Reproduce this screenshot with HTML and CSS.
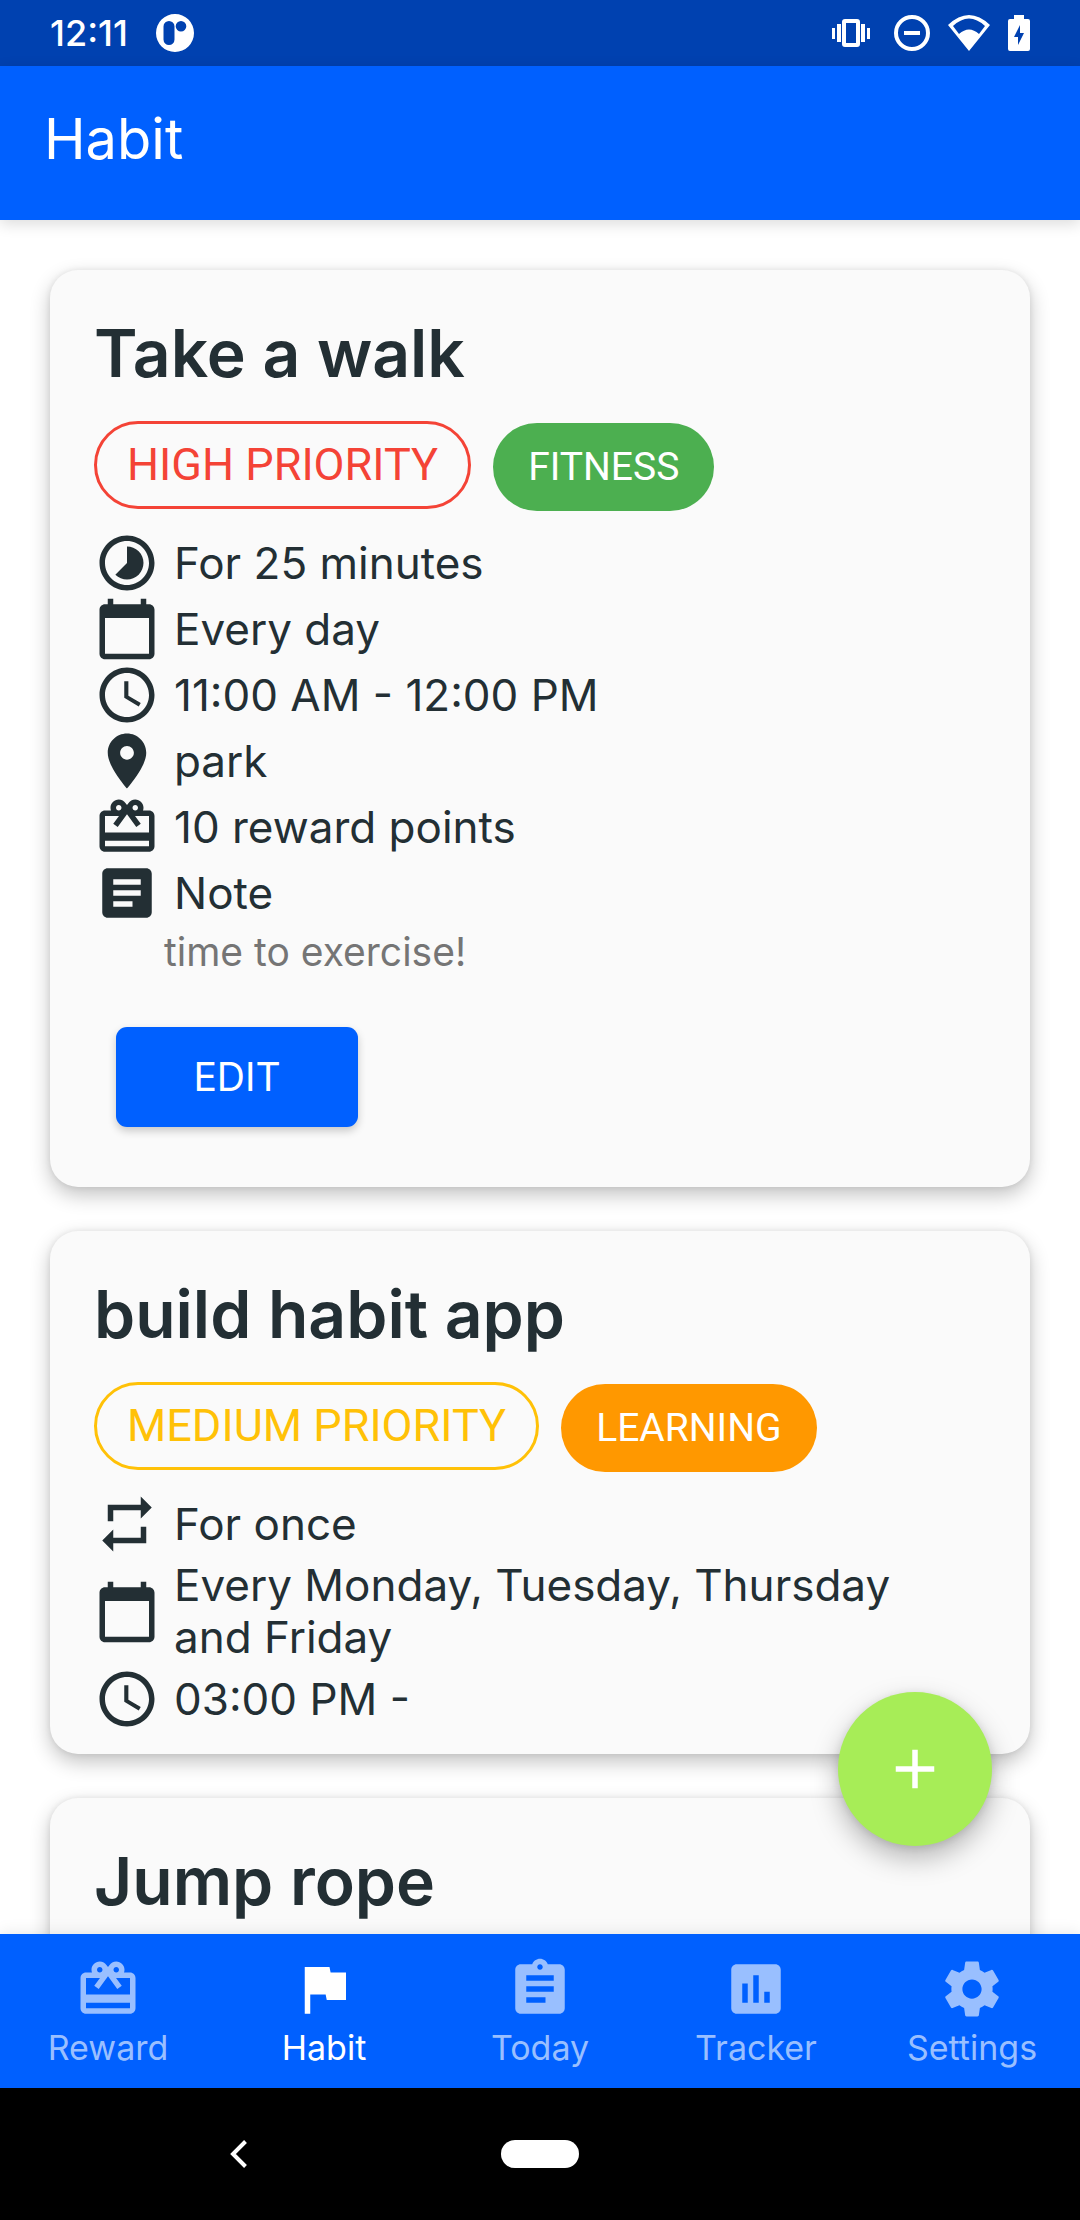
FILE: index.html
```html
<!DOCTYPE html>
<html lang="en">
<head>
<meta charset="utf-8">
<meta name="viewport" content="width=device-width, initial-scale=1">
<title>Habit</title>
<link rel="stylesheet" href="styles.css">
</head>
<body>
<svg class="sprite" aria-hidden="true">
  <symbol id="timelapse" viewBox="0 0 24 24"><path d="M16.24 7.76C15.07 6.59 13.54 6 12 6v6l-4.24 4.24c2.34 2.34 6.14 2.34 8.49 0 2.34-2.34 2.34-6.14-.01-8.48zM12 2C6.48 2 2 6.48 2 12s4.48 10 10 10 10-4.48 10-10S17.52 2 12 2zm0 18c-4.42 0-8-3.58-8-8s3.58-8 8-8 8 3.58 8 8-3.58 8-8 8z"/></symbol>
  <symbol id="calendar" viewBox="0 0 24 24"><path d="M20 3h-1V1h-2v2H7V1H5v2H4c-1.1 0-2 .9-2 2v16c0 1.1.9 2 2 2h16c1.1 0 2-.9 2-2V5c0-1.1-.9-2-2-2zm0 18H4V8h16v13z"/></symbol>
  <symbol id="clock" viewBox="0 0 24 24"><path d="M11.99 2C6.47 2 2 6.48 2 12s4.47 10 9.99 10C17.52 22 22 17.52 22 12S17.52 2 11.99 2zM12 20c-4.42 0-8-3.58-8-8s3.58-8 8-8 8 3.58 8 8-3.58 8-8 8zm.5-13H11v6l5.25 3.15.75-1.23-4.5-2.67z"/></symbol>
  <symbol id="place" viewBox="0 0 24 24"><path d="M12 2C8.13 2 5 5.13 5 9c0 5.25 7 13 7 13s7-7.75 7-13c0-3.87-3.13-7-7-7zm0 9.500c-1.380 0-2.500-1.120-2.500-2.500s1.120-2.500 2.500-2.500 2.500 1.120 2.500 2.500-1.120 2.500-2.500 2.500z"/></symbol>
  <symbol id="gift" viewBox="0 0 24 24"><path d="M20 6h-2.180c.11-.31.18-.65.18-1 0-1.660-1.340-3-3-3-1.050 0-1.960.54-2.500 1.350l-.5.67-.5-.68C10.960 2.540 10.050 2 9 2 7.340 2 6 3.340 6 5c0 .35.07.69.18 1H4c-1.110 0-1.990.89-1.990 2L2 19c0 1.110.89 2 2 2h16c1.110 0 2-.89 2-2V8c0-1.110-.89-2-2-2zm-5-2c.55 0 1 .45 1 1s-.45 1-1 1-1-.45-1-1 .45-1 1-1zM9 4c.55 0 1 .45 1 1s-.45 1-1 1-1-.45-1-1 .45-1 1-1zm11 15H4v-2h16v2zm0-5H4V8h5.080L7 10.830 8.620 12 11 8.760l1-1.360 1 1.360L15.380 12 17 10.830 14.920 8H20v6z"/></symbol>
  <symbol id="note" viewBox="0 0 24 24"><path d="M19 3H5c-1.100 0-2 .9-2 2v14c0 1.100.9 2 2 2h14c1.100 0 2-.9 2-2V5c0-1.100-.9-2-2-2zm-5 14H7v-2h7v2zm3-4H7v-2h10v2zm0-4H7V7h10v2z"/></symbol>
  <symbol id="repeat" viewBox="0 0 24 24"><path d="M7 7h10v3l4-4-4-4v3H5v6h2V7zm10 10H7v-3l-4 4 4 4v-3h12v-6h-2v4z"/></symbol>
  <symbol id="flag" viewBox="0 0 24 24"><path d="M14.400 6L14 4H5v17h2v-7h5.600l.4 2h7V6z"/></symbol>
  <symbol id="assignment" viewBox="0 0 24 24"><path d="M19 3h-4.180C14.400 1.840 13.300 1 12 1c-1.300 0-2.400.84-2.820 2H5c-1.100 0-2 .9-2 2v14c0 1.100.9 2 2 2h14c1.100 0 2-.9 2-2V5c0-1.100-.9-2-2-2zm-7 0c.55 0 1 .45 1 1s-.45 1-1 1-1-.45-1-1 .45-1 1-1zm2 14H7v-2h7v2zm3-4H7v-2h10v2zm0-4H7V7h10v2z"/></symbol>
  <symbol id="assessment" viewBox="0 0 24 24"><path d="M19 3H5c-1.100 0-2 .9-2 2v14c0 1.100.9 2 2 2h14c1.100 0 2-.9 2-2V5c0-1.100-.9-2-2-2zM9 17H7v-7h2v7zm4 0h-2V7h2v10zm4 0h-2v-4h2v4z"/></symbol>
  <symbol id="settings" viewBox="0 0 24 24"><path d="M19.430 12.980c.04-.32.07-.64.07-.98s-.03-.66-.07-.98l2.110-1.650c.19-.15.24-.42.12-.64l-2-3.460c-.12-.22-.39-.3-.61-.22l-2.490 1c-.52-.4-1.080-.73-1.690-.98l-.38-2.650C14.460 2.180 14.250 2 14 2h-4c-.25 0-.46.18-.49.42l-.38 2.650c-.61.25-1.170.59-1.690.98l-2.490-1c-.23-.09-.49 0-.61.22l-2 3.460c-.13.22-.07.49.12.64l2.110 1.650c-.04.32-.07.65-.07.98s.03.66.07.98l-2.110 1.650c-.19.15-.24.42-.12.64l2 3.460c.12.22.39.3.61.22l2.490-1c.52.4 1.080.73 1.690.98l.38 2.650c.03.24.24.42.49.42h4c.25 0 .46-.18.49-.42l.38-2.650c.61-.25 1.170-.59 1.690-.98l2.490 1c.23.09.49 0 .61-.22l2-3.460c.12-.22.07-.49-.12-.64l-2.110-1.650zM12 15.500c-1.930 0-3.500-1.570-3.500-3.500s1.570-3.500 3.500-3.500 3.500 1.570 3.500 3.500-1.570 3.500-3.500 3.500z"/></symbol>
  <symbol id="plus" viewBox="0 0 24 24"><path d="M19 13h-6v6h-2v-6H5v-2h6V5h2v6h6v2z"/></symbol>
</svg>

<div class="app">
  <div class="status-bar">
    <div class="status-group">
      <time class="status-time">12:11</time>
      <svg class="status-logo" viewBox="0 0 38 38" aria-hidden="true"><path fill-rule="evenodd" d="M19 0a19 19 0 1 1 0 38a19 19 0 1 1 0-38zM13 7a5.500 5.500 0 0 0-5.500 5.500v13a5.500 5.500 0 0 0 11 0v-13A5.500 5.500 0 0 0 13 7zM25 7a5.300 5.300 0 1 0 0 10.600A5.300 5.300 0 1 0 25 7z"/></svg>
    </div>
    <div class="status-group status-icons">
      <svg width="38" height="36" viewBox="0 0 38 36" aria-hidden="true"><path fill-rule="evenodd" d="M0 13h3v11H0zM5 9h4v18H5zM29 9h4v18h-4zM35 13h3v11h-3zM13 4h12q3 0 3 3v22q0 3-3 3H13q-3 0-3-3V7q0-3 3-3zM14 8v20h10V8z"/></svg>
      <svg width="36" height="36" viewBox="0 0 36 36" aria-hidden="true"><circle cx="18" cy="18" r="16" fill="none" stroke="#fff" stroke-width="4"/><path d="M10 16h16v4H10z"/></svg>
      <svg width="42" height="36" viewBox="0 0 42 36" aria-hidden="true"><path fill-rule="evenodd" d="M0 10Q21-10 42 10L21 36zM5 11l6 8q10-9 20 0l6-8Q21-4 5 11z"/></svg>
      <svg width="22" height="36" viewBox="0 0 22 36" aria-hidden="true"><path fill-rule="evenodd" d="M6 0h10v4h4q2 0 2 2v28q0 2-2 2H2q-2 0-2-2V6q0-2 2-2h4zM12 10L6 22h4v8l6-12h-4z"/></svg>
    </div>
  </div>

  <header class="app-bar"><h1>Habit</h1></header>

  <div class="content">
    <main class="habits">
      <article class="card">
        <h2>Take a walk</h2>
        <div class="chips"><span class="chip chip-high">HIGH PRIORITY</span><span class="chip chip-filled chip-fitness">FITNESS</span></div>
        <ul class="details">
          <li><svg class="icon"><use href="#timelapse"/></svg><span>For 25 minutes</span></li>
          <li><svg class="icon"><use href="#calendar"/></svg><span>Every day</span></li>
          <li><svg class="icon"><use href="#clock"/></svg><span>11:00 AM - 12:00 PM</span></li>
          <li><svg class="icon"><use href="#place"/></svg><span>park</span></li>
          <li><svg class="icon"><use href="#gift"/></svg><span>10 reward points</span></li>
          <li><svg class="icon"><use href="#note"/></svg><span>Note</span></li>
        </ul>
        <p class="note">time to exercise!</p>
        <button class="edit" type="button">EDIT</button>
      </article>

      <article class="card">
        <h2>build habit app</h2>
        <div class="chips"><span class="chip chip-medium">MEDIUM PRIORITY</span><span class="chip chip-filled chip-learning">LEARNING</span></div>
        <ul class="details">
          <li><svg class="icon"><use href="#repeat"/></svg><span>For once</span></li>
          <li><svg class="icon"><use href="#calendar"/></svg><span>Every Monday, Tuesday, Thursday and Friday</span></li>
          <li><svg class="icon"><use href="#clock"/></svg><span>03:00 PM -</span></li>
        </ul>
      </article>

      <article class="card">
        <h2>Jump rope</h2>
      </article>
    </main>
    <button class="fab" type="button" aria-label="Add habit"><svg class="icon"><use href="#plus"/></svg></button>
  </div>

  <nav class="tabs">
    <a href="#reward"><svg class="icon"><use href="#gift"/></svg><span>Reward</span></a>
    <a href="#habit" class="active" aria-current="page"><svg class="icon"><use href="#flag"/></svg><span>Habit</span></a>
    <a href="#today"><svg class="icon"><use href="#assignment"/></svg><span>Today</span></a>
    <a href="#tracker"><svg class="icon"><use href="#assessment"/></svg><span>Tracker</span></a>
    <a href="#options"><svg class="icon"><use href="#settings"/></svg><span>Settings</span></a>
  </nav>

  <div class="system-nav">
    <button class="back" type="button" aria-label="Back"><svg width="18" height="28" viewBox="0 0 18 28"><path d="M15.500 1.500L3 14l12.500 12.500" fill="none" stroke="#fff" stroke-width="4"/></svg></button>
    <button class="home" type="button" aria-label="Home"></button>
  </div>
</div>
</body>
</html>
```
FILE: styles.css
```css
* { box-sizing: border-box; }

body {
  margin: 0;
  background: #fff;
  color: #232f34;
  font-family: Inter, "Liberation Sans", sans-serif;
  font-size: 44px;
  line-height: 52px;
}

h1, h2, p, ul { margin: 0; padding: 0; }

button { border: 0; padding: 0; font: inherit; color: #fff; }

.sprite { display: none; }

.icon {
  flex: none;
  width: 66px;
  height: 66px;
  fill: currentColor;
}

.app {
  display: flex;
  flex-direction: column;
  height: 100vh;
}

/* status bar */
.status-bar {
  display: flex;
  justify-content: space-between;
  align-items: center;
  height: 66px;
  padding: 0 50px;
  background: #0041b0;
  color: #fff;
  fill: #fff;
}

.status-group { display: flex; align-items: center; gap: 28px; }
.status-icons { gap: 18px; }
.status-icons svg:first-child { margin-right: 6px; }
.status-time { font-size: 36px; font-weight: 500; line-height: 66px; }
.status-logo { width: 38px; height: 38px; }

.app-bar {
  position: relative;
  z-index: 1;
  padding: 40px 44px 48px;
  background: #0060ff;
  color: #fff;
  box-shadow: 0 4px 14px rgba(0, 0, 0, .14);
}

h1 { font-size: 56px; font-weight: 400; line-height: 66px; }

/* habit list */
.content { position: relative; flex: 1; min-height: 0; }

.habits {
  display: flex;
  flex-direction: column;
  gap: 44px;
  height: 100%;
  padding: 50px 50px 0;
  overflow-y: auto;
  scrollbar-width: none;
}

.card {
  flex: none;
  min-height: 300px;
  padding: 44px 44px 22px;
  border-radius: 28px;
  background: #fafafa;
  box-shadow: 0 8px 20px rgba(0, 0, 0, .24), 0 0 6px rgba(0, 0, 0, .08);
}

h2 { font-size: 66px; font-weight: 600; line-height: 78px; }

.chips { display: flex; align-items: flex-start; gap: 22px; margin: 29px 0 19px; }

.chip {
  padding: 0 30px;
  border: 3px solid;
  border-radius: 44px;
  font: 45px/82px Roboto, sans-serif;
}

.chip-filled { margin-top: 2px; padding: 0 35px; border: 0; color: #fff; font-size: 39px; line-height: 88px; }
.chip-high { color: #f44336; }
.chip-medium { color: #ffc107; }
.chip-fitness { background: #4caf50; }
.chip-learning { background: #ff9800; }

.details { padding-right: 22px; list-style: none; }
.details li { display: flex; align-items: center; gap: 14px; }
.details span { padding: 2px 0 3px; }

.note { padding-left: 70px; color: #757575; font-size: 39px; }

.edit {
  display: block;
  width: 242px;
  height: 100px;
  margin: 49px 22px 38px;
  border-radius: 11px;
  background: #0060ff;
  font-size: 39px;
  box-shadow: 0 4px 8px rgba(0, 0, 0, .2);
}

.fab {
  position: absolute;
  right: 88px;
  bottom: 88px;
  display: grid;
  place-items: center;
  width: 154px;
  height: 154px;
  border-radius: 50%;
  background: #a7ed57;
  box-shadow: 0 12px 28px rgba(0, 0, 0, .28), 0 2px 8px rgba(0, 0, 0, .1);
}

/* bottom tabs */
.tabs {
  position: relative;
  display: grid;
  grid-template-columns: repeat(5, 1fr);
  height: 154px;
  padding-top: 22px;
  background: #0060ff;
  box-shadow: 0 0 16px rgba(0, 0, 0, .1);
}

.tabs a {
  display: flex;
  flex-direction: column;
  align-items: center;
  color: #99bfff;
  font-size: 34px;
  text-decoration: none;
}

.tabs .active { color: #fff; }

.system-nav {
  display: grid;
  grid-template-columns: 1fr auto 1fr;
  place-items: center;
  gap: 24px;
  height: 132px;
  background: #000;
}

.back { display: flex; background: none; }
.home { width: 78px; height: 28px; border-radius: 14px; background: #fff; }
```
